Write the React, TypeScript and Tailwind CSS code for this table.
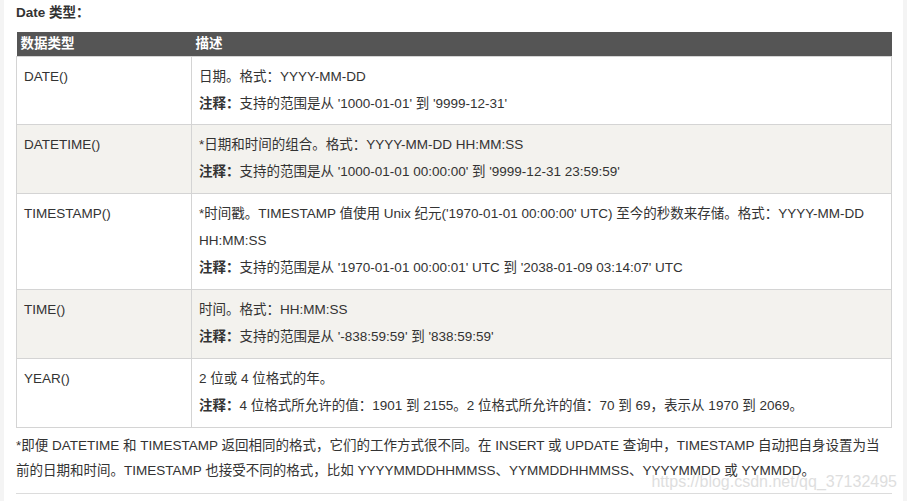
const FONT = "font-['Liberation_Sans','Noto_Sans_CJK_SC',sans-serif]";

const ROWS: { type: string; desc: string[]; note: string }[] = [
  {
    type: "DATE()",
    desc: ["日期。格式：YYYY-MM-DD"],
    note: "支持的范围是从 '1000-01-01' 到 '9999-12-31'",
  },
  {
    type: "DATETIME()",
    desc: ["*日期和时间的组合。格式：YYYY-MM-DD HH:MM:SS"],
    note: "支持的范围是从 '1000-01-01 00:00:00' 到 '9999-12-31 23:59:59'",
  },
  {
    type: "TIMESTAMP()",
    desc: [
      "*时间戳。TIMESTAMP 值使用 Unix 纪元('1970-01-01 00:00:00' UTC) 至今的秒数来存储。格式：YYYY-MM-DD",
      "HH:MM:SS",
    ],
    note: "支持的范围是从 '1970-01-01 00:00:01' UTC 到 '2038-01-09 03:14:07' UTC",
  },
  {
    type: "TIME()",
    desc: ["时间。格式：HH:MM:SS"],
    note: "支持的范围是从 '-838:59:59' 到 '838:59:59'",
  },
  {
    type: "YEAR()",
    desc: ["2 位或 4 位格式的年。"],
    note: "4 位格式所允许的值：1901 到 2155。2 位格式所允许的值：70 到 69，表示从 1970 到 2069。",
  },
];

export default function App() {
  return (
    <div className={`h-[501px] w-full overflow-hidden bg-[#f4f4f4] ${FONT} text-[13.5px] text-[#333]`}>
      <div className="relative mx-[4px] h-full bg-white pl-[12px] pr-[11px]">
        <div className="mb-[6px] font-bold leading-[26px]">Date 类型：</div>

        <table className="w-full border-collapse">
          <thead>
            <tr className="bg-[#555] text-left text-white">
              <th className="w-[175px] px-[4px] font-bold leading-[24px]">数据类型</th>
              <th className="px-[4px] font-bold leading-[24px]">描述</th>
            </tr>
          </thead>
          <tbody>
            {ROWS.map((r, i) => {
              // first row sits 1px shorter in the original
              const pad = i === 0 ? "pt-[6px] pb-[7px]" : "pt-[6px] pb-[8px]";
              return (
                <tr key={r.type} className={i % 2 === 1 ? "bg-[#f3f2ee]" : "bg-white"}>
                  <td className={`border border-[#d4d4d4] px-[7px] ${pad} align-top leading-[27px]`}>
                    {r.type}
                  </td>
                  <td className={`border border-[#d4d4d4] px-[7px] ${pad} align-top leading-[27px]`}>
                    {r.desc.map((d) => (
                      <div key={d} className="whitespace-nowrap">
                        {d}
                      </div>
                    ))}
                    <div className="whitespace-nowrap">
                      <b>注释：</b>
                      {r.note}
                    </div>
                  </td>
                </tr>
              );
            })}
          </tbody>
        </table>

        <div className="mt-[5px] leading-[25px]">
          <div className="whitespace-nowrap">
            *即便 DATETIME 和 TIMESTAMP 返回相同的格式，它们的工作方式很不同。在 INSERT 或 UPDATE 查询中，TIMESTAMP 自动把自身设置为当
          </div>
          <div className="whitespace-nowrap">
            前的日期和时间。TIMESTAMP 也接受不同的格式，比如 YYYYMMDDHHMMSS、YYMMDDHHMMSS、YYYYMMDD 或 YYMMDD。
          </div>
        </div>
        <div className="mt-[10px] h-px bg-[#dcdcdc]" />

        <span className="pointer-events-none absolute right-[6px] top-[472px] text-[16px] leading-[20px] text-[#dedede]">
          https://blog.csdn.net/qq_37132495
        </span>
      </div>
    </div>
  );
}
